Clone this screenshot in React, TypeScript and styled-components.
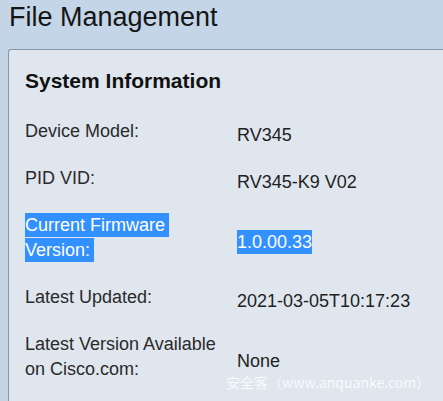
import React from "react";
import styled, { createGlobalStyle } from "styled-components";

const GlobalStyle = createGlobalStyle`
  html, body {
    margin: 0;
    padding: 0;
    background: #c3d5e7;
  }
  body {
    font-family: "Liberation Sans", Arial, sans-serif;
  }
`;

const Page = styled.div`
  position: relative;
  height: 100vh;
  overflow: hidden;
  display: flex;
  flex-direction: column;
  padding-left: 8px;
  box-sizing: border-box;
`;

const Title = styled.h1`
  flex: none;
  height: 49px;
  margin: 0;
  padding: 2px 0 0 1px;
  box-sizing: border-box;
  font-size: 27px;
  font-weight: normal;
  line-height: 31px;
  color: #151515;
`;

const Panel = styled.section`
  flex: 1;
  background: #dfe6ee;
  border: 1px solid #8796a5;
  border-right: none;
  border-bottom: none;
  border-top-left-radius: 3px;
  padding: 19px 0 0 16px;
`;

const Heading = styled.h2`
  margin: 0;
  font-size: 21px;
  font-weight: bold;
  line-height: 24px;
  color: #111;
`;

const Rows = styled.div`
  display: flex;
  flex-direction: column;
  gap: 22px;
  margin-top: 26px;
`;

const Row = styled.div`
  display: grid;
  grid-template-columns: 212px 1fr;
  align-items: center;
`;

const Label = styled.div`
  padding-right: 10px;
  font-size: 18px;
  line-height: 25px;
  color: #2a2a2a;
`;

const Value = styled.div`
  margin: 4px 0 -4px;
  font-size: 18px;
  line-height: 25px;
  color: #222;
`;

const Selected = styled.span<{ $tail?: number }>`
  background: #3390ff;
  color: #fff;
  padding: 2px ${({ $tail }) => $tail ?? 0}px 2px 0;
  -webkit-box-decoration-break: clone;
  box-decoration-break: clone;
`;

const Watermark = styled.div`
  position: absolute;
  left: 226px;
  top: 372px;
  font-family: "Noto Sans CJK SC", "Noto Sans", sans-serif;
  font-size: 14px;
  line-height: 20px;
  color: rgba(255, 255, 255, 0.78);
  white-space: nowrap;
`;

const info = [
  { label: "Device Model:", value: "RV345" },
  { label: "PID VID:", value: "RV345-K9 V02" },
  { label: "Current Firmware Version:", value: "1.0.00.33", selected: true },
  { label: "Latest Updated:", value: "2021-03-05T10:17:23" },
  { label: "Latest Version Available on Cisco.com:", value: "None" },
];

export default function App() {
  return (
    <>
      <GlobalStyle />
      <Page>
        <Title>File Management</Title>
        <Panel>
          <Heading>System Information</Heading>
          <Rows>
            {info.map((item) => (
              <Row key={item.label}>
                <Label>
                  {item.selected ? <Selected $tail={4}>{item.label}</Selected> : item.label}
                </Label>
                <Value>
                  {item.selected ? <Selected>{item.value}</Selected> : item.value}
                </Value>
              </Row>
            ))}
          </Rows>
        </Panel>
        <Watermark>安全客（www.anquanke.com）</Watermark>
      </Page>
    </>
  );
}
